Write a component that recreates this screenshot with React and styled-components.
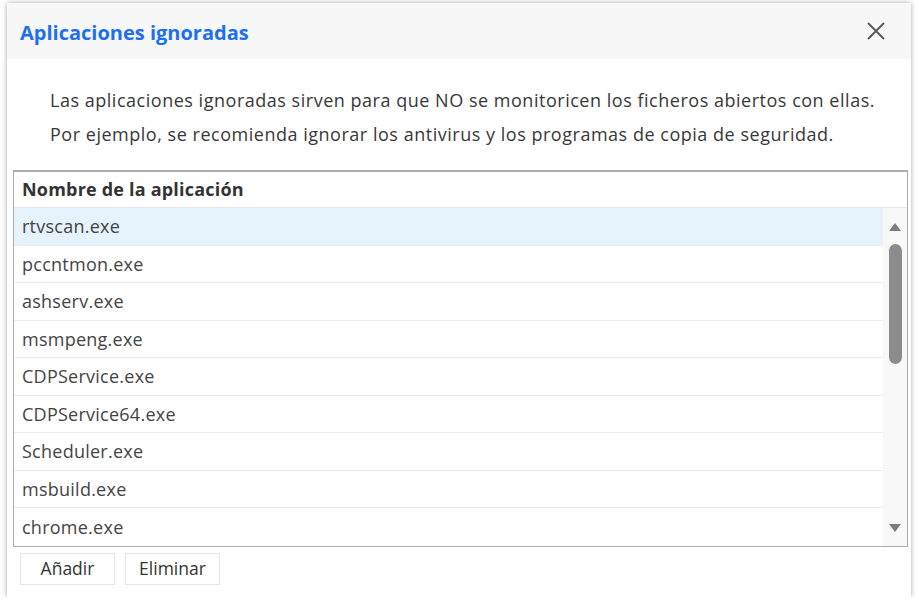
import React, { useState } from "react";
import styled, { createGlobalStyle } from "styled-components";

const GlobalStyle = createGlobalStyle`
body{
  margin:0;
  background:#fff;
  font-family:'Open Sans','Lato',sans-serif;
}
`

const Page = styled.div`
padding:3px 0 0 7px;
`

const Dialog = styled.div`
width:904px;
height:594px;
background:#fff;
box-shadow:0 0 5px rgba(0,0,0,0.35);
display:flex;
flex-direction:column;
`

const Header = styled.div`
height:56px;
background:#f7f7f7;
display:flex;
align-items:center;
justify-content:space-between;
padding:0 24px 0 13px;
box-sizing:border-box;
`

const Title = styled.h2`
margin:0;
padding-top:3px;
font-size:20px;
font-weight:700;
color:#1b6ff0;
`

const Close = styled.button`
border:none;
background:none;
padding:0;
width:22px;
height:22px;
cursor:pointer;
display:flex;
align-items:center;
justify-content:center;
`

const Description = styled.div`
padding:24px 0 0 43px;
height:111px;
box-sizing:border-box;
font-size:18px;
letter-spacing:0.52px;
line-height:34px;
color:#383838;
`

const Table = styled.div`
margin-left:6px;
width:895px;
height:377px;
box-sizing:border-box;
border:1px solid #a9adb1;
border-top-width:2px;
border-bottom-width:2px;
display:flex;
flex-direction:column;
`

const HeadRow = styled.div`
height:36px;
flex:none;
display:flex;
align-items:center;
padding:0 0 2px 8px;
box-sizing:border-box;
font-size:18px;
letter-spacing:0.2px;
font-weight:700;
color:#333;
border-bottom:1px solid #e6e6e6;
`

const Body = styled.div`
flex:1;
display:flex;
`

const Rows = styled.div`
flex:1;
display:flex;
flex-direction:column;
`

const Row = styled.div`
height:37.5px;
box-sizing:border-box;
display:flex;
align-items:center;
padding-left:8px;
font-size:18px;
letter-spacing:0.25px;
color:#444;
background:${p => p.selected ? '#e6f2fc' : '#fff'};
border-bottom:${p => p.last ? 'none' : '1px solid #ececec'};
`

const Scroll = styled.div`
width:24px;
background:#f8f8f8;
display:flex;
flex-direction:column;
align-items:center;
padding:15px 0 14px;
box-sizing:border-box;
`

const Thumb = styled.div`
width:13px;
height:120px;
border-radius:7px;
background:#8c8c8c;
margin-top:13px;
`

const Spacer = styled.div`
flex:1;
`

const Buttons = styled.div`
display:flex;
gap:10px;
padding:6px 0 0 13px;
`

const Button = styled.button`
width:95px;
height:32px;
padding:0 0 2px;
background:#fff;
border:1px solid #e6e6e6;
font-family:inherit;
font-size:17.5px;
color:#333;
cursor:pointer;
`

const apps = [
  "rtvscan.exe",
  "pccntmon.exe",
  "ashserv.exe",
  "msmpeng.exe",
  "CDPService.exe",
  "CDPService64.exe",
  "Scheduler.exe",
  "msbuild.exe",
  "chrome.exe",
]

const Arrow = ({ down }) => (
  <svg width="12" height="8" viewBox="0 0 12 8">
    <path d={down ? "M0 0h12L6 8z" : "M0 8h12L6 0z"} fill="#7d7d7d" />
  </svg>
)

const App = () => {
  const [selected, setSelected] = useState(0)

  return (
    <Page>
      <GlobalStyle />
      <Dialog>
        <Header>
          <Title>Aplicaciones ignoradas</Title>
          <Close>
            <svg width="18" height="18" viewBox="0 0 18 18">
              <path d="M1 1L17 17M17 1L1 17" stroke="#555" strokeWidth="1.8" />
            </svg>
          </Close>
        </Header>
        <Description>
          Las aplicaciones ignoradas sirven para que NO se monitoricen los ficheros abiertos con ellas.<br />
          Por ejemplo, se recomienda ignorar los antivirus y los programas de copia de seguridad.
        </Description>
        <Table>
          <HeadRow>Nombre de la aplicación</HeadRow>
          <Body>
            <Rows>
              {apps.map((a, i) => (
                <Row key={a} selected={i === selected} last={i === apps.length - 1} onClick={() => setSelected(i)}>
                  {a}
                </Row>
              ))}
            </Rows>
            <Scroll>
              <Arrow />
              <Thumb />
              <Spacer />
              <Arrow down />
            </Scroll>
          </Body>
        </Table>
        <Buttons>
          <Button>Añadir</Button>
          <Button>Eliminar</Button>
        </Buttons>
      </Dialog>
    </Page>
  )
}

export default App
